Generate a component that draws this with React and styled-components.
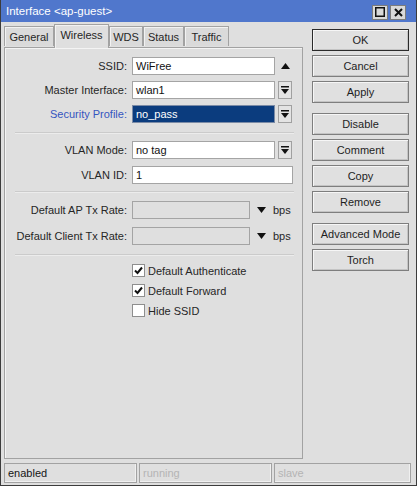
import React from "react";
import styled, { createGlobalStyle, css } from "styled-components";

const GlobalStyle = createGlobalStyle`
  html, body {
    margin: 0;
    padding: 0;
    background: #dfdfdf;
  }
  * {
    box-sizing: border-box;
  }
`;

const Window = styled.div`
  width: 417px;
  height: 486px;
  display: flex;
  flex-direction: column;
  background: #dfdfdf;
  border: 1px solid #3c3c3c;
  border-top: none;
  font-family: "Liberation Sans", Arial, sans-serif;
  font-size: 11px;
  color: #202020;
  overflow: hidden;
`;

const TitleBar = styled.div`
  height: 22px;
  display: flex;
  align-items: center;
  justify-content: space-between;
  padding: 0 10px 0 5px;
  background: #5077cc;
  color: #ffffff;
  font-size: 11.5px;
`;

const TitleButtons = styled.div`
  display: flex;
  gap: 2px;
  margin-top: 2px;
`;

const TitleButton = styled.div`
  width: 16px;
  height: 15px;
  display: flex;
  align-items: center;
  justify-content: center;
  background: #d9d9d9;
  border: 1px solid #7c7c7c;
`;

const Body = styled.div`
  flex: 1;
  display: flex;
  padding: 0 0 0 3px;
`;

const LeftColumn = styled.div`
  width: 299px;
  display: flex;
  flex-direction: column;
`;

const Tabs = styled.div`
  height: 25px;
  display: flex;
  align-items: flex-end;
  position: relative;
  z-index: 1;
`;

const Tab = styled.div`
  width: ${(p) => p.w}px;
  height: 20px;
  display: flex;
  align-items: center;
  justify-content: center;
  background: #dadada;
  border: 1px solid #a2a2a2;
  border-bottom: none;
  box-shadow: inset 1px 1px 0 #f2f2f2;
  margin-bottom: 1px;
  color: #262626;

  ${(p) =>
    p.active &&
    css`
      height: 24px;
      margin-bottom: -1px;
      background: #dfdfdf;
      padding-bottom: 4px;
    `}
`;

const Panel = styled.div`
  height: 412px;
  border: 1px solid #a2a2a2;
  box-shadow: inset 1px 1px 0 #f4f4f4;
  padding-top: 9px;
  display: flex;
  flex-direction: column;
`;

const Section = styled.div`
  display: flex;
  flex-direction: column;
  gap: ${(p) => p.gap}px;
`;

const Row = styled.div`
  height: 18px;
  display: flex;
  align-items: center;
`;

const Label = styled.div`
  width: 122px;
  text-align: right;
  margin-right: 5px;
  white-space: nowrap;
  color: ${(p) => (p.blue ? "#3555c0" : "#262626")};
`;

const Field = styled.div`
  width: ${(p) => p.w}px;
  height: 18px;
  display: flex;
  align-items: center;
  padding-left: 3px;
  border: 1px solid #a4a4a4;
  background: ${(p) => (p.disabled ? "#dfdfdf" : "#ffffff")};
  color: #111111;

  ${(p) =>
    p.selected &&
    css`
      background: #0b3c7e;
      color: #ffffff;
      border-color: #7b8ba6;
    `}
`;

const DropButton = styled.div`
  width: 14px;
  height: 18px;
  margin-left: 3px;
  display: flex;
  align-items: center;
  justify-content: center;
  background: #e3e3e3;
  border: 1px solid #a0a0a0;
`;

const PlainArrow = styled.div`
  width: 14px;
  height: 18px;
  margin-left: ${(p) => p.gap || 3}px;
  display: flex;
  align-items: center;
  justify-content: center;
`;

const Unit = styled.span`
  margin-left: 5px;
  color: #262626;
`;

const Separator = styled.div`
  height: 2px;
  margin: ${(p) => p.top}px 8px ${(p) => p.bottom}px 10px;
  border-top: 1px solid #cbcbcb;
  border-bottom: 1px solid #ececec;
`;

const CheckRow = styled.label`
  height: 13px;
  display: flex;
  align-items: center;
  padding-left: 127px;
  color: #262626;
`;

const Box = styled.span`
  width: 13px;
  height: 13px;
  margin-right: 3px;
  display: flex;
  align-items: center;
  justify-content: center;
  background: #ffffff;
  border: 1px solid #8e8e8e;
`;

const RightColumn = styled.div`
  width: 97px;
  margin-left: 9px;
  padding-top: 7px;
  display: flex;
  flex-direction: column;
  gap: 10px;
`;

const ButtonGroup = styled.div`
  display: flex;
  flex-direction: column;
  gap: 4px;
`;

const Button = styled.div`
  height: 22px;
  display: flex;
  align-items: center;
  justify-content: center;
  background: #e0e0e0;
  border: 1px solid ${(p) => (p.primary ? "#2a2a2a" : "#7e7e7e")};
  box-shadow: inset 1px 1px 0 #f6f6f6, inset -1px -1px 0 #c4c4c4;
  color: #1e1e1e;
`;

const StatusBar = styled.div`
  display: flex;
  gap: 2px;
  padding: 3px 5px 2px 3px;
`;

const StatusCell = styled.div`
  width: ${(p) => p.w}px;
  height: 20px;
  display: flex;
  align-items: center;
  padding-left: 3px;
  border: 1px solid #a2a2a2;
  box-shadow: inset -1px -1px 0 #f0f0f0;
  color: ${(p) => (p.dim ? "#b4b4b4" : "#151515")};
`;

const DropIcon = () => (
  <svg width="8" height="9" viewBox="0 0 8 9">
    <rect x="0" y="0" width="8" height="1.5" fill="#111" />
    <path d="M0 3 L8 3 L4 8 Z" fill="#111" />
  </svg>
);

const UpIcon = () => (
  <svg width="9" height="6" viewBox="0 0 9 6">
    <path d="M0 6 L9 6 L4.5 0 Z" fill="#111" />
  </svg>
);

const DownIcon = () => (
  <svg width="9" height="6" viewBox="0 0 9 6">
    <path d="M0 0 L9 0 L4.5 6 Z" fill="#111" />
  </svg>
);

const CheckIcon = () => (
  <svg width="9" height="9" viewBox="0 0 9 9">
    <path d="M1 4.5 L3.5 7 L8 1.5" fill="none" stroke="#111" strokeWidth="2" />
  </svg>
);

const SelectRow = ({ label, value, blue, selected }) => (
  <Row>
    <Label blue={blue}>{label}:</Label>
    <Field w={143} selected={selected}>
      {value}
    </Field>
    <DropButton>
      <DropIcon />
    </DropButton>
  </Row>
);

const RateRow = ({ label }) => (
  <Row>
    <Label>{label}:</Label>
    <Field w={118} disabled />
    <PlainArrow gap={4}>
      <DownIcon />
    </PlainArrow>
    <Unit>bps</Unit>
  </Row>
);

const Check = ({ checked, children }) => (
  <CheckRow>
    <Box>{checked && <CheckIcon />}</Box>
    {children}
  </CheckRow>
);

const tabs = [
  { name: "General", w: 50 },
  { name: "Wireless", w: 55, active: true },
  { name: "WDS", w: 34 },
  { name: "Status", w: 41 },
  { name: "Traffic", w: 45 },
];

const App = () => {
  return (
    <Window>
      <GlobalStyle />
      <TitleBar>
        <span>Interface &lt;ap-guest&gt;</span>
        <TitleButtons>
          <TitleButton>
            <svg width="10" height="10" viewBox="0 0 10 10">
              <rect x="0.75" y="0.75" width="8.5" height="8.5" fill="none" stroke="#111" strokeWidth="1.5" />
            </svg>
          </TitleButton>
          <TitleButton>
            <svg width="9" height="9" viewBox="0 0 9 9">
              <path d="M1 1 L8 8 M8 1 L1 8" stroke="#111" strokeWidth="2" />
            </svg>
          </TitleButton>
        </TitleButtons>
      </TitleBar>
      <Body>
        <LeftColumn>
          <Tabs>
            {tabs.map((t) => (
              <Tab key={t.name} w={t.w} active={t.active}>
                {t.name}
              </Tab>
            ))}
          </Tabs>
          <Panel>
            <Section gap={6}>
              <Row>
                <Label>SSID:</Label>
                <Field w={143}>WiFree</Field>
                <PlainArrow>
                  <UpIcon />
                </PlainArrow>
              </Row>
              <SelectRow label="Master Interface" value="wlan1" />
              <SelectRow label="Security Profile" value="no_pass" blue selected />
            </Section>
            <Separator top={9} bottom={7} />
            <Section gap={7}>
              <SelectRow label="VLAN Mode" value="no tag" />
              <Row>
                <Label>VLAN ID:</Label>
                <Field w={161}>1</Field>
              </Row>
            </Section>
            <Separator top={7} bottom={8} />
            <Section gap={8}>
              <RateRow label="Default AP Tx Rate" />
              <RateRow label="Default Client Tx Rate" />
            </Section>
            <Separator top={9} bottom={8} />
            <Section gap={7}>
              <Check checked>Default Authenticate</Check>
              <Check checked>Default Forward</Check>
              <Check>Hide SSID</Check>
            </Section>
          </Panel>
        </LeftColumn>
        <RightColumn>
          <ButtonGroup>
            <Button primary>OK</Button>
            <Button>Cancel</Button>
            <Button>Apply</Button>
          </ButtonGroup>
          <ButtonGroup>
            <Button>Disable</Button>
            <Button>Comment</Button>
            <Button>Copy</Button>
            <Button>Remove</Button>
          </ButtonGroup>
          <ButtonGroup>
            <Button>Advanced Mode</Button>
            <Button>Torch</Button>
          </ButtonGroup>
        </RightColumn>
      </Body>
      <StatusBar>
        <StatusCell w={133}>enabled</StatusCell>
        <StatusCell w={133} dim>
          running
        </StatusCell>
        <StatusCell w={137} dim>
          slave
        </StatusCell>
      </StatusBar>
    </Window>
  );
};

export default App;
